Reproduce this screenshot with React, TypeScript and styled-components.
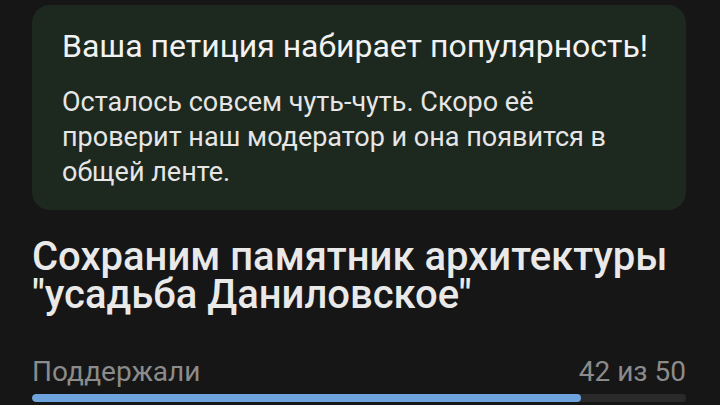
import React from "react";
import styled, { createGlobalStyle } from "styled-components";

const Global = createGlobalStyle`
  html, body {
    margin: 0;
    background: #161616;
  }
  body {
    font-family: Roboto, "Noto Sans", sans-serif;
    color: #ececec;
  }
`;

const Page = styled.div`
  display: flex;
  flex-direction: column;
  padding: 5px 34px 0 32px;
`;

const Notice = styled.section`
  background: #1d281f;
  border-radius: 18px;
  padding: 22px 30px 20px;
`;

const NoticeTitle = styled.h2`
  margin: 0;
  font-size: 32px;
  line-height: 38px;
  font-weight: 400;
  color: #f2f2f2;
`;

const NoticeText = styled.p`
  margin: 20px 0 0;
  font-size: 27px;
  line-height: 35px;
  font-weight: 400;
  color: #e6e6e6;
`;

const PetitionTitle = styled.h1`
  margin: 28px 0 0;
  font-size: 40px;
  line-height: 38px;
  font-weight: 500;
  color: #e9e9e9;
`;

const StatsRow = styled.div`
  display: flex;
  justify-content: space-between;
  align-items: baseline;
  margin-top: 43px;
  font-size: 28px;
  line-height: 30px;
  color: #8b8b8b;
`;

const Track = styled.div`
  margin-top: 7px;
  height: 8px;
  border-radius: 4px;
  background: #2a2a2a;
  overflow: hidden;
`;

const Fill = styled.div`
  height: 100%;
  border-radius: 4px;
  background: #6fa3dd;
`;

const supported = 42;
const goal = 50;

export default function App() {
  return (
    <>
      <Global />
      <Page>
        <Notice>
          <NoticeTitle>Ваша петиция набирает популярность!</NoticeTitle>
          <NoticeText>
            Осталось совсем чуть-чуть. Скоро её проверит наш модератор и она
            появится в общей ленте.
          </NoticeText>
        </Notice>
        <PetitionTitle>
          Сохраним памятник архитектуры "усадьба Даниловское"
        </PetitionTitle>
        <StatsRow>
          <span>Поддержали</span>
          <span>
            {supported} из {goal}
          </span>
        </StatsRow>
        <Track>
          <Fill style={{ width: `${(supported / goal) * 100}%` }} />
        </Track>
      </Page>
    </>
  );
}
